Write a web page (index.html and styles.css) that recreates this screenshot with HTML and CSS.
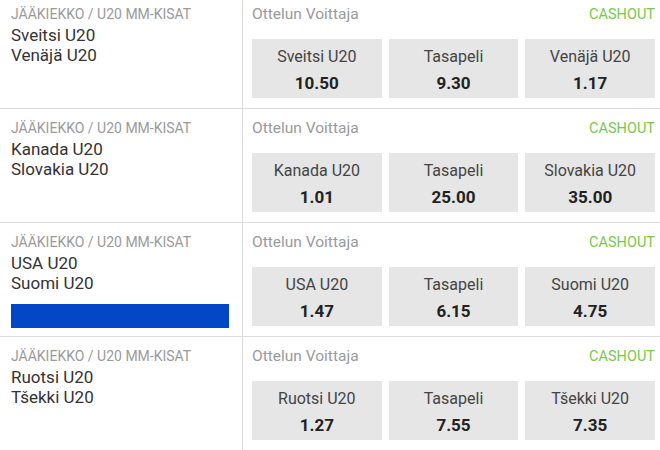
FILE: index.html
```html
<!DOCTYPE html>
<html lang="fi">
<head>
    <meta charset="UTF-8">
    <meta name="viewport" content="width=device-width, initial-scale=1.0">
    <title>Ottelun Voittaja</title>
    <link rel="stylesheet" href="styles.css">
</head>
<body>

<div class="events">
    <!-- Sveitsi - Venäjä -->
    <div class="event">
        <div class="event-info">
            <div class="league">Jääkiekko / U20 MM-kisat</div>
            <div class="team">Sveitsi U20</div>
            <div class="team">Venäjä U20</div>
        </div>
        <div class="market">
            <div class="market-head">
                <span class="market-name">Ottelun Voittaja</span>
                <span class="cashout">Cashout</span>
            </div>
            <div class="odds">
                <div class="odd"><span class="odd-label">Sveitsi U20</span><span class="odd-value">10.50</span></div>
                <div class="odd"><span class="odd-label">Tasapeli</span><span class="odd-value">9.30</span></div>
                <div class="odd"><span class="odd-label">Venäjä U20</span><span class="odd-value">1.17</span></div>
            </div>
        </div>
    </div>

    <!-- Kanada - Slovakia -->
    <div class="event">
        <div class="event-info">
            <div class="league">Jääkiekko / U20 MM-kisat</div>
            <div class="team">Kanada U20</div>
            <div class="team">Slovakia U20</div>
        </div>
        <div class="market">
            <div class="market-head">
                <span class="market-name">Ottelun Voittaja</span>
                <span class="cashout">Cashout</span>
            </div>
            <div class="odds">
                <div class="odd"><span class="odd-label">Kanada U20</span><span class="odd-value">1.01</span></div>
                <div class="odd"><span class="odd-label">Tasapeli</span><span class="odd-value">25.00</span></div>
                <div class="odd"><span class="odd-label">Slovakia U20</span><span class="odd-value">35.00</span></div>
            </div>
        </div>
    </div>

    <!-- USA - Suomi (live) -->
    <div class="event">
        <div class="event-info">
            <div class="league">Jääkiekko / U20 MM-kisat</div>
            <div class="team">USA U20</div>
            <div class="team">Suomi U20</div>
            <div class="live-bar"></div>
        </div>
        <div class="market">
            <div class="market-head">
                <span class="market-name">Ottelun Voittaja</span>
                <span class="cashout">Cashout</span>
            </div>
            <div class="odds">
                <div class="odd"><span class="odd-label">USA U20</span><span class="odd-value">1.47</span></div>
                <div class="odd"><span class="odd-label">Tasapeli</span><span class="odd-value">6.15</span></div>
                <div class="odd"><span class="odd-label">Suomi U20</span><span class="odd-value">4.75</span></div>
            </div>
        </div>
    </div>

    <!-- Ruotsi - Tšekki -->
    <div class="event">
        <div class="event-info">
            <div class="league">Jääkiekko / U20 MM-kisat</div>
            <div class="team">Ruotsi U20</div>
            <div class="team">Tšekki U20</div>
        </div>
        <div class="market">
            <div class="market-head">
                <span class="market-name">Ottelun Voittaja</span>
                <span class="cashout">Cashout</span>
            </div>
            <div class="odds">
                <div class="odd"><span class="odd-label">Ruotsi U20</span><span class="odd-value">1.27</span></div>
                <div class="odd"><span class="odd-label">Tasapeli</span><span class="odd-value">7.55</span></div>
                <div class="odd"><span class="odd-label">Tšekki U20</span><span class="odd-value">7.35</span></div>
            </div>
        </div>
    </div>
</div>

</body>
</html>
```

FILE: styles.css
```css
body {
    font-family: Roboto, 'Liberation Sans', sans-serif;
    background-color: #fff;
    color: #333;
    margin: 0;
    padding: 0;
    overflow: hidden;
}
.events {
    margin-top: -5px;
}
.event {
    display: flex;
    height: 113px;
    border-bottom: 1px solid #dcdcdc;
}
.event-info {
    width: 231px;
    padding: 10px 0 0 11px;
    border-right: 1px solid #dcdcdc;
}
.league {
    font-size: 14px;
    line-height: 18px;
    color: #9a9a9a;
    text-transform: uppercase;
    margin-bottom: 2px;
}
.team {
    font-size: 17px;
    line-height: 20px;
    color: #333;
}
.live-bar {
    width: 218px;
    height: 24px;
    margin-top: 11px;
    background-color: #0447c6;
}
.market {
    flex: 1;
    padding: 10px 5px 0 9px;
}
.market-head {
    display: flex;
    justify-content: space-between;
    align-items: center;
    height: 18px;
}
.market-name {
    font-size: 15.5px;
    color: #9a9a9a;
}
.cashout {
    font-size: 14.5px;
    color: #78c850;
    text-transform: uppercase;
}
.odds {
    display: grid;
    grid-template-columns: repeat(3, 1fr);
    gap: 7px;
    margin-top: 16px;
}
.odd {
    height: 59px;
    background-color: #e6e6e6;
    display: flex;
    flex-direction: column;
    align-items: center;
    padding-top: 9px;
    box-sizing: border-box;
}
.odd-label {
    font-size: 16px;
    line-height: 18px;
    color: #444;
}
.odd-value {
    font-size: 17px;
    line-height: 22px;
    font-weight: bold;
    color: #222;
    margin-top: 6px;
}
```
